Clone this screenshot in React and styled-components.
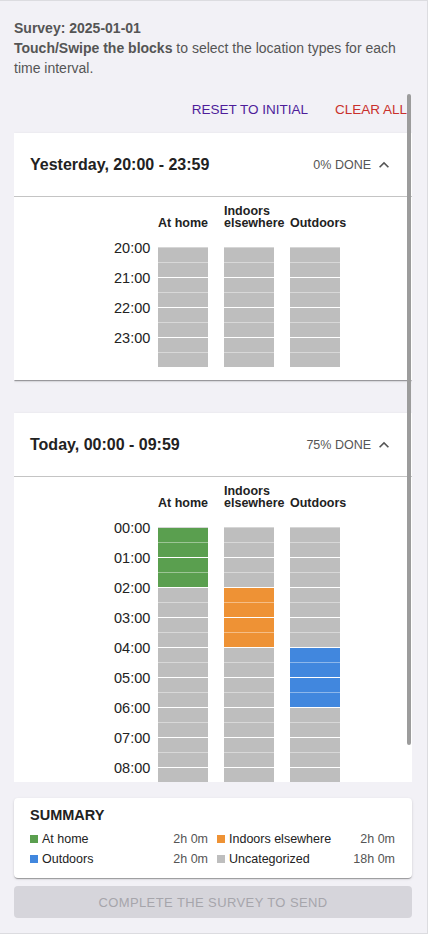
import React from "react";
import styled, { createGlobalStyle } from "styled-components";

const GlobalStyle = createGlobalStyle`
  html, body {
    margin: 0;
    padding: 0;
    background: #fff;
  }
  body {
    font-family: "Liberation Sans", Arial, Helvetica, sans-serif;
  }
  * {
    box-sizing: border-box;
  }
`;

const COLORS = {
  home: "#5a9f4f",
  indoors: "#ee9235",
  outdoors: "#4187de",
  none: "#bebebe",
};

const CATEGORIES = [
  { key: "home", lines: ["At home"] },
  { key: "indoors", lines: ["Indoors", "elsewhere"] },
  { key: "outdoors", lines: ["Outdoors"] },
];

const Page = styled.div`
  width: 428px;
  height: 934px;
  display: flex;
  flex-direction: column;
  padding: 17px 15px 15px 14px;
  background: #f2f1f6;
  border: 1px solid #dcdce0;
  border-left: none;
`;

const Intro = styled.p`
  margin: 0;
  font-size: 14px;
  line-height: 20px;
  color: #555;
`;

const ScrollArea = styled.div`
  position: relative;
  flex: 1;
  min-height: 0;
  margin-top: 16px;
`;

const Scroller = styled.div`
  height: 100%;
  overflow-y: auto;
  scrollbar-width: none;
  &::-webkit-scrollbar {
    display: none;
  }
`;

const Thumb = styled.div`
  position: absolute;
  top: 0;
  right: 1px;
  width: 4px;
  height: 651px;
  border-radius: 2px;
  background: #9c9c9c;
`;

const ActionRow = styled.div`
  height: 30px;
  margin-bottom: 9px;
  display: flex;
  align-items: center;
  justify-content: flex-end;
  gap: 27px;
  padding-right: 5px;
`;

const TextButton = styled.button`
  border: none;
  background: none;
  padding: 0;
  font-family: inherit;
  font-size: 13.5px;
  text-transform: uppercase;
  color: ${({ danger }) => (danger ? "#c9302c" : "#4e1d9a")};
  cursor: pointer;
`;

const Cards = styled.div`
  display: flex;
  flex-direction: column;
  gap: 33px;
`;

const Card = styled.section`
  background: #fff;
  box-shadow: 0px 2px 1px -1px rgba(0, 0, 0, 0.2),
    0px 1px 1px 0px rgba(0, 0, 0, 0.14), 0px 1px 3px 0px rgba(0, 0, 0, 0.12);
`;

const CardHeader = styled.div`
  height: 64px;
  display: flex;
  align-items: center;
  padding: 0 18px 0 16px;
  border-bottom: 1px solid #c4c4c4;
`;

const CardTitle = styled.h2`
  flex: 1;
  margin: 0;
  font-size: 16px;
  font-weight: 700;
  color: #222;
`;

const Progress = styled.span`
  font-size: 12.5px;
  color: #555;
  margin-right: 3px;
`;

const Chevron = styled.svg`
  width: 20px;
  height: 20px;
  fill: #555;
`;

const Details = styled.div`
  display: flex;
  justify-content: center;
  padding: 8px 0 13px 28px;
`;

const Schedule = styled.div`
  display: flex;
  gap: 16px;
`;

const Column = styled.div`
  width: ${({ wide }) => (wide ? "36px" : "50px")};
  margin-right: ${({ wide }) => (wide ? "-8px" : "0")};
  display: flex;
  flex-direction: column;
`;

const ColumnTitle = styled.div`
  height: 24px;
  margin-bottom: 18px;
  display: flex;
  flex-direction: column;
  justify-content: flex-end;
  font-size: 12.5px;
  font-weight: 700;
  line-height: 12px;
  color: #222;
  white-space: nowrap;
`;

const TimeLabel = styled.div`
  height: 30px;
  font-size: 14.5px;
  line-height: 16px;
  text-align: right;
  color: #222;
  transform: translateY(-7px);
`;

const Slot = styled.div`
  height: 15px;
  background: ${({ color }) => color};
  border-top: 1px solid
    ${({ hourStart, first }) =>
      first ? "#d6d6d6" : hourStart ? "#fff" : "rgba(255,255,255,0.4)"};
`;

const Summary = styled.section`
  margin-top: 16px;
  padding: 7px 17px 9px 16px;
  background: #fff;
  border-radius: 4px;
  box-shadow: 0px 2px 1px -1px rgba(0, 0, 0, 0.2),
    0px 1px 1px 0px rgba(0, 0, 0, 0.14), 0px 1px 3px 0px rgba(0, 0, 0, 0.12);
`;

const SummaryTitle = styled.h3`
  margin: 0 0 4px;
  font-size: 14.5px;
  line-height: 20px;
  font-weight: 700;
  color: #222;
`;

const SummaryGrid = styled.div`
  display: grid;
  grid-template-columns: 1fr 1fr;
  column-gap: 9px;
`;

const SummaryItem = styled.div`
  display: flex;
  align-items: center;
  height: 20px;
  font-size: 12.5px;
`;

const Swatch = styled.span`
  width: 8px;
  height: 8px;
  margin-right: 4px;
  background: ${({ color }) => color};
`;

const Label = styled.span`
  flex: 1;
  color: #222;
`;

const Duration = styled.span`
  color: #555;
`;

const SendButton = styled.button`
  margin-top: 8px;
  height: 32px;
  width: 100%;
  border: none;
  border-radius: 4px;
  background: #d6d5db;
  color: #a6a5ab;
  font-family: inherit;
  font-size: 13px;
  letter-spacing: 0.4px;
  text-transform: uppercase;
`;

const pad = (n) => String(n).padStart(2, "0");

const SlotColumn = ({ category, slots }) =>
  slots.map((cat, i) => (
    <Slot
      key={i}
      first={i === 0}
      hourStart={i % 2 === 0}
      color={cat === category ? COLORS[category] : COLORS.none}
    />
  ));

const DayCard = ({ title, progress, startHour, slots }) => {
  const hours = Array.from({ length: slots.length / 2 }, (_, i) => startHour + i);
  return (
    <Card>
      <CardHeader>
        <CardTitle>{title}</CardTitle>
        <Progress>{progress}% DONE</Progress>
        <Chevron viewBox="0 0 24 24">
          <path d="M12 8l-6 6 1.41 1.41L12 10.83l4.59 4.58L18 14z" />
        </Chevron>
      </CardHeader>
      <Details>
        <Schedule>
          <Column wide>
            <ColumnTitle />
            {hours.map((h) => (
              <TimeLabel key={h}>{pad(h)}:00</TimeLabel>
            ))}
          </Column>
          {CATEGORIES.map((c) => (
            <Column key={c.key}>
              <ColumnTitle>
                {c.lines.map((l) => (
                  <span key={l}>{l}</span>
                ))}
              </ColumnTitle>
              <SlotColumn category={c.key} slots={slots} />
            </Column>
          ))}
        </Schedule>
      </Details>
    </Card>
  );
};

const yesterday = Array(8).fill(null);
const today = [
  ...Array(4).fill("home"),
  ...Array(4).fill("indoors"),
  ...Array(4).fill("outdoors"),
  ...Array(8).fill(null),
];

const summary = [
  { color: COLORS.home, label: "At home", time: "2h 0m" },
  { color: COLORS.indoors, label: "Indoors elsewhere", time: "2h 0m" },
  { color: COLORS.outdoors, label: "Outdoors", time: "2h 0m" },
  { color: COLORS.none, label: "Uncategorized", time: "18h 0m" },
];

export default function App() {
  return (
    <>
      <GlobalStyle />
      <Page>
        <Intro>
          <strong>Survey: 2025-01-01</strong>
          <br />
          <strong>Touch/Swipe the blocks</strong> to select the location types
          for each time interval.
        </Intro>
        <ScrollArea>
          <Scroller>
            <ActionRow>
              <TextButton>Reset to initial</TextButton>
              <TextButton danger>Clear all</TextButton>
            </ActionRow>
            <Cards>
              <DayCard
                title="Yesterday, 20:00 - 23:59"
                progress={0}
                startHour={20}
                slots={yesterday}
              />
              <DayCard
                title="Today, 00:00 - 09:59"
                progress={75}
                startHour={0}
                slots={today}
              />
            </Cards>
          </Scroller>
          <Thumb />
        </ScrollArea>
        <Summary>
          <SummaryTitle>SUMMARY</SummaryTitle>
          <SummaryGrid>
            {summary.map((s) => (
              <SummaryItem key={s.label}>
                <Swatch color={s.color} />
                <Label>{s.label}</Label>
                <Duration>{s.time}</Duration>
              </SummaryItem>
            ))}
          </SummaryGrid>
        </Summary>
        <SendButton disabled>Complete the survey to send</SendButton>
      </Page>
    </>
  );
}
